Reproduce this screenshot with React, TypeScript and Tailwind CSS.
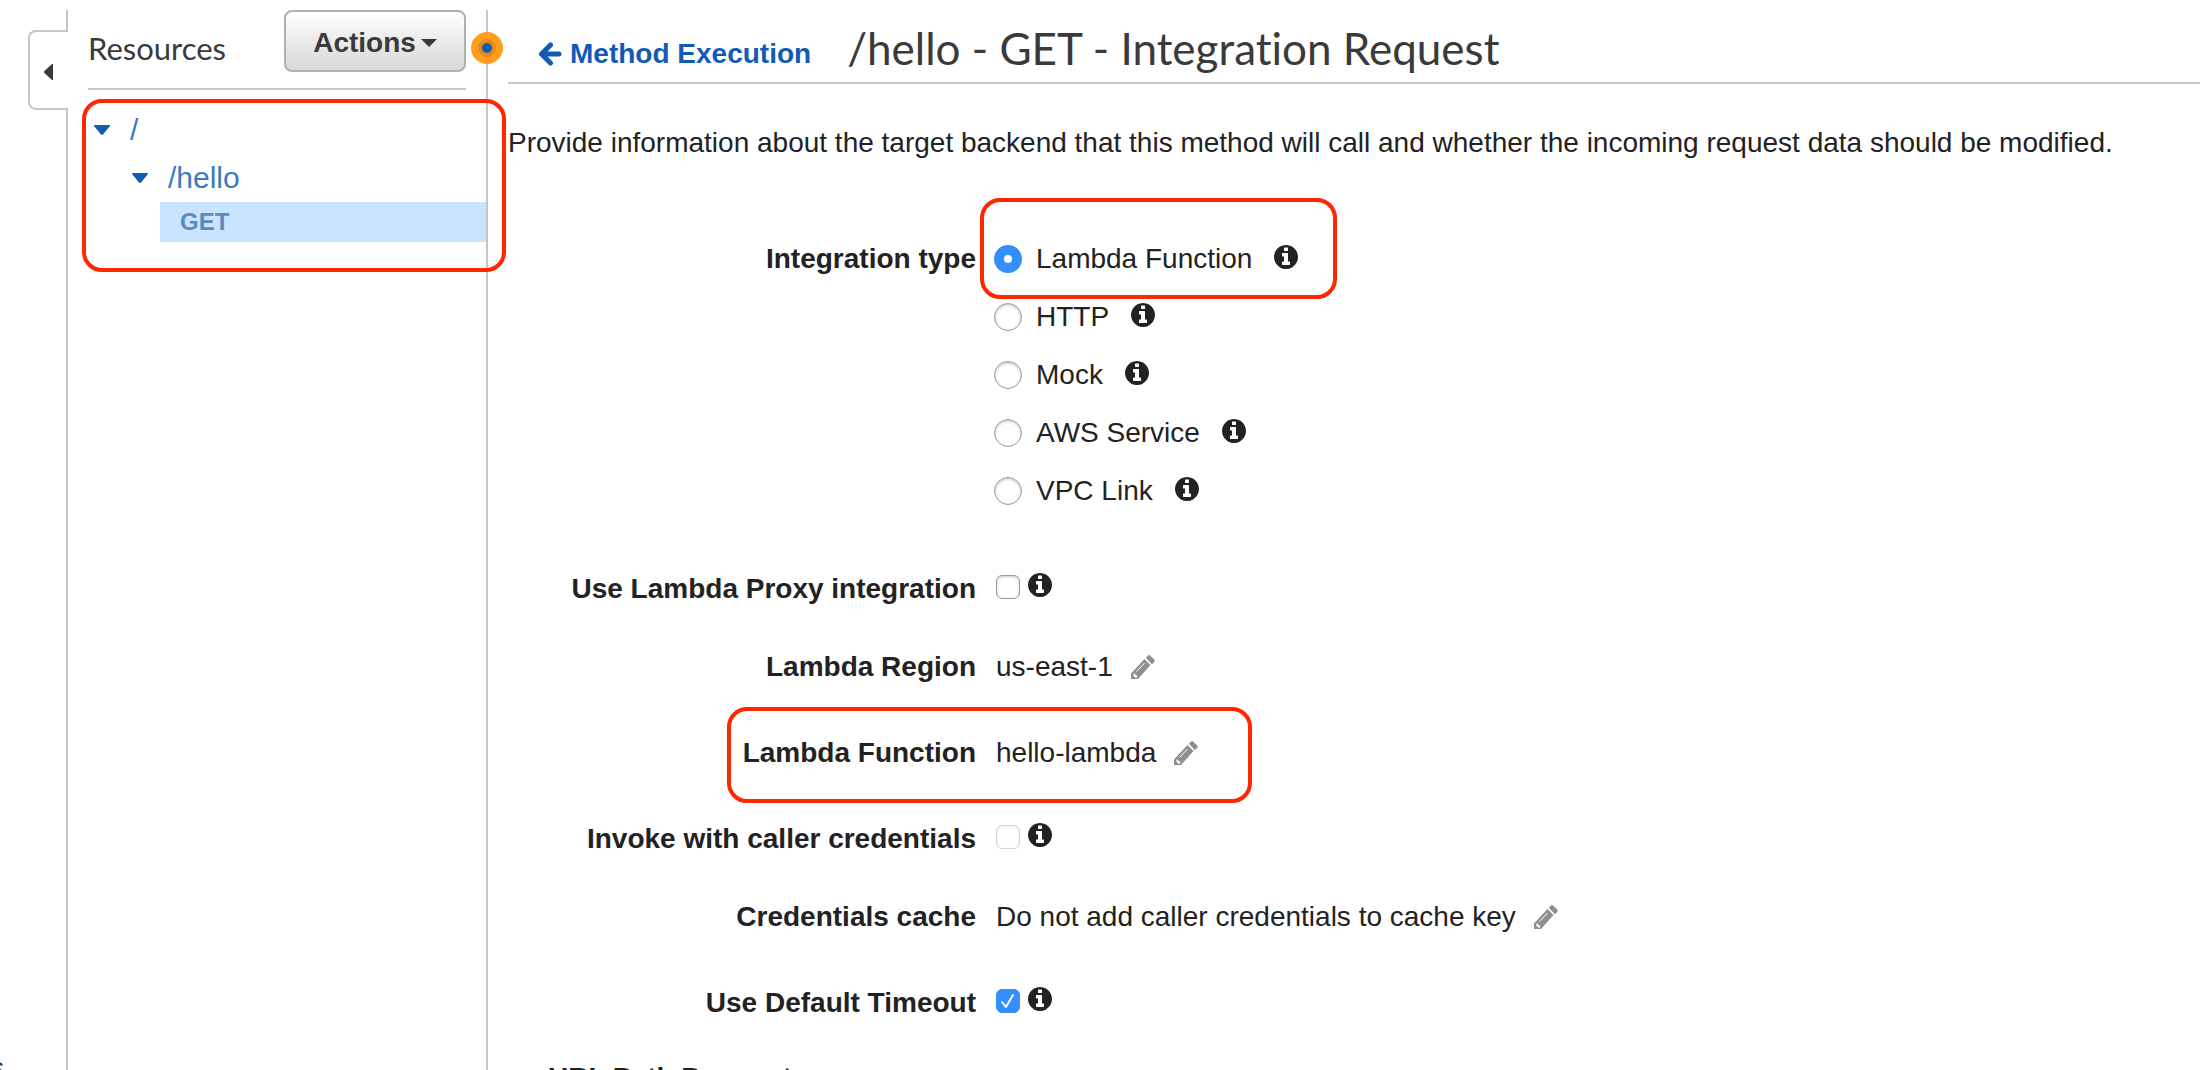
import type { ReactNode } from 'react'

const TYPES = ['Lambda Function', 'HTTP', 'Mock', 'AWS Service', 'VPC Link']

function InfoIcon() {
  return (
    <svg viewBox="0 0 1536 1536" className="mb-1 size-6 shrink-0 fill-[#222]" aria-hidden="true">
      <path d="M1024 1248v-160q0-14-9-23t-23-9h-96V544q0-14-9-23t-23-9H544q-14 0-23 9t-9 23v160q0 14 9 23t23 9h96v320h-96q-14 0-23 9t-9 23v160q0 14 9 23t23 9h448q14 0 23-9t9-23zM896 352V192q0-14-9-23t-23-9H672q-14 0-23 9t-9 23v160q0 14 9 23t23 9h192q14 0 23-9t9-23zm640 416q0 209-103 385.500T1153.500 1433 768 1536t-385.500-103T103 1153.500 0 768t103-385.500T382.500 103 768 0t385.500 103T1433 382.500 1536 768z" />
    </svg>
  )
}

function PencilButton({ label }: { label: string }) {
  return (
    <button type="button" aria-label={label} className="ml-[18px]">
      <svg viewBox="0 0 24 24" className="size-6 fill-[#8f8f8f]" aria-hidden="true">
        <path d="M0 24v-5.500L13.500 4l6 6L7 24zM14.800 2.800L17 .6q1-1 2.200 0l4 4q1 1.200 0 2.400l-2.300 2.200z" />
        <path d="M5.500 16.500l8-8.500" className="fill-none stroke-white" />
        <path d="M2.500 18.500l1.500.2.500 1.400 1.500.5.300 1.500-1.300 1-2.500-2z" className="fill-white" />
      </svg>
    </button>
  )
}

function Check({ id, checked, disabled }: { id: string; checked?: boolean; disabled?: boolean }) {
  return (
    <span className="relative mr-2 flex">
      <input
        id={id}
        type="checkbox"
        defaultChecked={checked}
        disabled={disabled}
        className="peer size-6 appearance-none rounded-md border border-[#9c9c9c] bg-white shadow-[inset_0_1px_3px_#c8c8c8] checked:border-[#338fff] checked:bg-[#338fff] checked:shadow-none disabled:border-[#d4d4d4] disabled:shadow-[inset_0_1px_3px_#ebebeb]"
      />
      <svg viewBox="0 0 24 24" className="pointer-events-none absolute inset-0 hidden size-6 fill-none stroke-white stroke-2 peer-checked:block" aria-hidden="true">
        <path d="M6 13l4 5 7-12" strokeLinecap="round" strokeLinejoin="round" />
      </svg>
    </span>
  )
}

function Row({ label, htmlFor, className, children }: { label: string; htmlFor?: string; className: string; children: ReactNode }) {
  return (
    <div className={`flex items-center ${className}`}>
      <div className="w-[468px] shrink-0 text-right font-bold">
        {htmlFor ? <label htmlFor={htmlFor}>{label}</label> : label}
      </div>
      <div className={htmlFor ? 'ml-5 flex items-center pb-1' : 'ml-5 flex items-center'}>{children}</div>
    </div>
  )
}

function Caret() {
  return (
    <svg viewBox="0 0 16 10" className="h-[10px] w-4 fill-[#125bb5]" aria-hidden="true">
      <path d="M0 0h16v1L9 9.500q-1 .8-2 0L0 1z" />
    </svg>
  )
}

export default function App() {
  return (
    <div className="flex h-screen overflow-hidden bg-white font-['Liberation_Sans',Arial,sans-serif] text-[28px] leading-10 text-[#222]">
      <div className="relative flex w-[68px] shrink-0 flex-col items-end pt-[10px]">
        <div className="h-5 border-r-2 border-[#c6c6c6]" />
        <button type="button" aria-label="Collapse" className="flex h-20 w-10 shrink-0 items-center rounded-l-lg border-2 border-r-0 border-[#c6c6c6] pt-1 pl-[14px]">
          <svg viewBox="0 0 9 16" className="h-4 w-[9px] fill-[#3a3a3a]" aria-hidden="true">
            <path d="M9 0v16H8L.4 9q-.8-1 0-2L8 0z" />
          </svg>
        </button>
        <div className="grow border-r-2 border-[#c6c6c6]" />
        <span className="absolute bottom-[-18px] left-[-10px] text-[#3a3a3a]">s</span>
      </div>

      <aside className="relative mt-[10px] w-[420px] shrink-0 border-r-2 border-[#c6c6c6] pl-5">
        <div className="mr-5 flex h-20 items-start justify-between border-b-2 border-[#c6c6c6]">
          <h2 className="mt-[18px] font-[Lato,sans-serif] text-[31px] text-[#3a3a3a]">Resources</h2>
          <button type="button" className="flex h-[62px] w-[182px] items-center justify-center gap-[5px] rounded-lg border-2 border-[#b0b0b0] bg-linear-to-b from-white to-[#d8d8d8] pt-1 font-bold text-[#3a3a3a]">
            Actions
            <svg viewBox="0 0 16 8" className="h-2 w-4 fill-[#3a3a3a]" aria-hidden="true">
              <path d="M0 0h16L8 8z" />
            </svg>
          </button>
        </div>
        <ul className="pt-4 text-[30px] text-[#3b7ac2]">
          <li>
            <a href="#root" className="flex h-12 items-center gap-5 pl-[6px]"><Caret />/</a>
            <ul>
              <li>
                <a href="#hello" className="flex h-12 items-center gap-5 pl-11"><Caret />/hello</a>
                <ul>
                  <li>
                    <a href="#get" className="ml-[72px] flex h-10 items-center bg-[#c9e4ff] pl-5 text-2xl font-bold text-[#5b8abb]">GET</a>
                  </li>
                </ul>
              </li>
            </ul>
          </li>
        </ul>
        <div className="pointer-events-none absolute top-[89px] left-[14px] h-[173px] w-[424px] rounded-[20px] border-4 border-[#ff2600]" />
        <div className="absolute top-[22px] -right-[17px] flex size-8 items-center justify-center rounded-full bg-[#ff9d1e]">
          <span className="size-[18px] rounded-full border-4 border-[#e68a15] bg-[#125bb5]" />
        </div>
      </aside>

      <main className="min-w-0 grow pt-[10px] pl-5">
        <div className="flex h-[74px] items-center border-b-2 border-[#c6c6c6] pt-1 pl-[30px]">
          <a href="#method" className="flex items-center gap-2 pt-3 font-bold text-[#125bb5]">
            <svg viewBox="0 0 24 24" className="size-6 fill-none stroke-[#125bb5] stroke-[5]" aria-hidden="true">
              <path d="M21 12H4M12.500 3L3.500 12l9 9" strokeLinecap="round" strokeLinejoin="round" />
            </svg>
            Method Execution
          </a>
          <h1 className="ml-9 font-[Lato,sans-serif] text-[44px] text-[#3a3a3a] [font-variant-ligatures:none]">/hello - GET - Integration Request</h1>
        </div>
        <p className="mt-[39px] whitespace-nowrap">
          Provide information about the target backend that this method will call and whether the incoming request data should be modified.
        </p>

        <fieldset className="relative mt-[67px] flex">
          <legend className="float-left w-[468px] text-right leading-[58px] font-bold">Integration type</legend>
          <div className="ml-[18px]">
            {TYPES.map((type, i) => (
              <div key={type} className="flex h-[58px] items-center">
                <input
                  id={type}
                  type="radio"
                  name="type"
                  defaultChecked={i === 0}
                  className="size-7 appearance-none rounded-full border border-[#9c9c9c] shadow-[inset_0_1px_3px_#bcbcbc] checked:border-[10px] checked:border-[#338fff] checked:shadow-none"
                />
                <label htmlFor={type} className="ml-[14px]">{type}</label>
                <span className="ml-[22px]"><InfoIcon /></span>
              </div>
            ))}
          </div>
          <div className="pointer-events-none absolute -top-[32px] left-[472px] h-[101px] w-[357px] rounded-[20px] border-4 border-[#ff2600]" />
        </fieldset>

        <Row label="Use Lambda Proxy integration" htmlFor="proxy" className="mt-10 h-[58px]">
          <Check id="proxy" />
          <InfoIcon />
        </Row>
        <Row label="Lambda Region" className="mt-5 h-[58px]">
          us-east-1
          <PencilButton label="Edit region" />
        </Row>
        <div className="relative">
          <Row label="Lambda Function" className="mt-7 h-[58px]">
            hello-lambda
            <PencilButton label="Edit function" />
          </Row>
          <div className="pointer-events-none absolute -top-[17px] left-[219px] h-24 w-[525px] rounded-[20px] border-4 border-[#ff2600]" />
        </div>
        <Row label="Invoke with caller credentials" htmlFor="invoke" className="mt-7 h-[58px]">
          <Check id="invoke" disabled />
          <InfoIcon />
        </Row>
        <Row label="Credentials cache" className="mt-5 h-[58px]">
          Do not add caller credentials to cache key
          <PencilButton label="Edit credentials cache" />
        </Row>
        <Row label="Use Default Timeout" htmlFor="timeout" className="mt-7 h-[58px]">
          <Check id="timeout" checked />
          <InfoIcon />
        </Row>
        <h3 className="mt-[26px] ml-10 font-bold">URL Path Parameters</h3>
      </main>
    </div>
  )
}
